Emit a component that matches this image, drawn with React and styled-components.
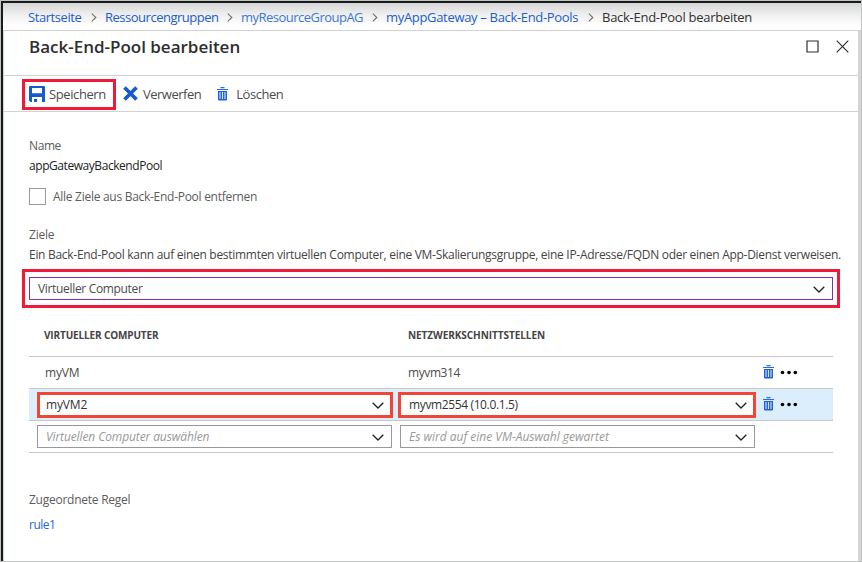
import React from "react";
import styled, { createGlobalStyle } from "styled-components";

const GlobalStyle = createGlobalStyle`
  *, *::before, *::after { box-sizing: border-box; }
  body {
    margin: 0;
    overflow: hidden;
    background: #fff;
    font-family: "Open Sans", "Noto Sans", sans-serif;
    font-size: 12px;
    line-height: 20px;
  }
  svg { display: block; flex: none; }
`;

const Frame = styled.div`
  height: 562px;
  border: 1px solid #c0c3c1;
`;

const Shell = styled.div`
  height: 560px;
  display: flex;
  flex-direction: column;
  border-top: 2px solid #161a19;
  border-left: 2px solid #161a19;
`;

const Breadcrumb = styled.nav`
  flex: none;
  height: 28px;
  padding: 1px 0 0 25px;
  display: flex;
  align-items: center;
  border-bottom: 1px solid #d2d2d2;
  background: linear-gradient(#d6d6d6, #f0f0f0 45%, #ffffff 85%);
`;

const Label = styled.span`
  white-space: nowrap;
  font-size: ${(p) => p.$size || 12}px;
  letter-spacing: ${(p) => p.$track || 0}px;
  color: ${(p) => p.$color || "#4c4c4c"};
`;

const Crumb = styled(Label)`
  width: ${(p) => p.$width}px;
  font-size: 13px;
`;

const Panel = styled.main`
  flex: 1;
  min-height: 0;
  border-left: 1px solid #d2d2d2;
  border-right: 3px solid #d5d5d5;
`;

const Header = styled.header`
  height: 45px;
  padding: 0 9px 13px 25px;
  display: flex;
  align-items: center;
  justify-content: space-between;
  border-bottom: 1px solid #d2d2d2;
`;

const Title = styled.h1`
  margin: 0;
  font-size: 17px;
  font-weight: 600;
  line-height: 24px;
  letter-spacing: -0.01px;
  color: #2e2e2e;
`;

const WindowButtons = styled.div`
  display: flex;
  gap: 17px;
`;

const Toolbar = styled.div`
  height: 36px;
  padding-left: 18px;
  display: flex;
  align-items: center;
  border-bottom: 1px solid #d2d2d2;
`;

const Command = styled.div`
  height: 31px;
  display: flex;
  align-items: center;
  gap: ${(p) => p.$gap}px;
  margin-left: ${(p) => p.$offset || 0}px;
`;

const MarkedCommand = styled(Command)`
  width: 94px;
  padding: 0 0 1px 4px;
  margin-top: 1px;
  border: 3px solid #f01a38;
`;

const Body = styled.section`
  padding: 24px 0 0 18px;
`;

const Field = styled.div`
  height: 20px;
  padding-left: 7px;
  display: flex;
  align-items: center;
  gap: 7px;
  margin-bottom: ${(p) => p.$after || 0}px;
`;

const Checkbox = styled.span`
  width: 17px;
  height: 17px;
  margin-bottom: 1px;
  border: 1px solid #999;
`;

const Highlight = styled.div`
  width: 818px;
  height: 39px;
  padding: 5px 4px;
  border: 3px solid #f01a38;
`;

const Select = styled.div`
  width: ${(p) => p.$width}px;
  height: ${(p) => (p.$marked ? 26 : 23)}px;
  margin-left: ${(p) => p.$offset || 0}px;
  padding: 1px ${(p) => (p.$marked ? 6 : 7)}px 0 ${(p) => p.$pad || 8}px;
  display: flex;
  align-items: center;
  justify-content: space-between;
  background: #fff;
  border: ${(p) => (p.$marked ? 3 : 1)}px solid ${(p) => p.$border};
`;

const Placeholder = styled(Label)`
  font-style: italic;
  color: #999;
`;

const Table = styled.div`
  width: 804px;
  margin: 8px 0 37px 7px;
`;

const TableHead = styled.div`
  height: 41px;
  display: grid;
  grid-template-columns: 364px 1fr;
  padding: 0 0 3px 15px;
  align-items: center;
  font-weight: 700;
  border-bottom: 1px solid #c8c8c8;
`;

const Row = styled.div`
  height: 32px;
  display: grid;
  grid-template-columns: 371px 363px 70px;
  align-items: center;
  background: ${(p) => (p.$active ? "#dceefc" : "transparent")};
  border-bottom: 1px solid #c8c8c8;
`;

const Cell = styled.div`
  display: flex;
  padding: 1px 0 0 ${(p) => p.$pad}px;
`;

const Actions = styled.div`
  display: flex;
  align-items: center;
  gap: 6px;
  padding-bottom: 1px;
`;

const Trash = () => (
  <svg width="11" height="14" viewBox="0 0 11 14">
    <path d="M3.500.6h4M0 2.500h11" stroke="#2a6ae0" strokeWidth="1.200" fill="none" />
    <path d="M1 4h9v8.500q0 1-1 1H2q-1 0-1-1z" fill="#1e60dc" />
    <path d="M3 5v7M5.500 5v7M8 5v7" stroke="#d4e3fb" strokeWidth="1.100" />
  </svg>
);

const Dots = () => (
  <svg width="18" height="5" viewBox="0 0 18 5">
    <g fill="#000">
      <circle cx="2.500" cy="2.500" r="1.800" />
      <circle cx="9" cy="2.500" r="1.800" />
      <circle cx="15.300" cy="2.500" r="1.800" />
    </g>
  </svg>
);

const Chevron = () => (
  <svg width="12" height="7" viewBox="0 0 12 7">
    <path d="M.7.7 6 6 11.300.7" fill="none" stroke="#222" strokeWidth="1.300" />
  </svg>
);

const Save = () => (
  <svg width="16" height="16" viewBox="0 0 16 16">
    <path
      fillRule="evenodd"
      fill="#1559d3"
      d="M1 0h14q1 0 1 1v15h-3v-5H3v5H1.500L0 14.500V1q0-1 1-1zM3 2v5.200h10V2zM5 13h3v3H5z"
    />
  </svg>
);

const Discard = () => (
  <svg width="15" height="15" viewBox="0 0 15 15">
    <path d="M1.500 1.500l12 12M13.500 1.500l-12 12" stroke="#1559d3" strokeWidth="3.700" />
  </svg>
);

const Separator = styled.svg.attrs({ width: 6, height: 9, viewBox: "0 0 6 9" })`
  margin-right: ${(p) => p.$after}px;
`;

const Arrow = ({ after }) => (
  <Separator $after={after}>
    <path d="M.8.7 4.800 4.500.8 8.300" fill="none" stroke="#707070" strokeWidth="1.100" />
  </Separator>
);

const LINK = "#1a5dcc";

export default function App() {
  return (
    <>
      <GlobalStyle />
      <Frame>
        <Shell>
          <Breadcrumb>
            <Crumb $width={63} $track={-0.43} $color={LINK}>Startseite</Crumb>
            <Arrow after={8} />
            <Crumb $width={122} $track={-0.49} $color={LINK}>Ressourcengruppen</Crumb>
            <Arrow after={8} />
            <Crumb $width={131} $track={-0.52} $color="#3a78d8">myResourceGroupAG</Crumb>
            <Arrow after={8} />
            <Crumb $width={202} $track={-0.32} $color={LINK}>myAppGateway – Back-End-Pools</Crumb>
            <Arrow after={8} />
            <Crumb $width={160} $track={-0.27} $color="#303030">Back-End-Pool bearbeiten</Crumb>
          </Breadcrumb>
          <Panel>
            <Header>
              <Title>Back-End-Pool bearbeiten</Title>
              <WindowButtons>
                <svg width="13" height="13" viewBox="0 0 13 13">
                  <path d="M1 1h11v11H1z" fill="none" stroke="#303030" strokeWidth="1.200" />
                </svg>
                <svg width="13" height="13" viewBox="0 0 13 13">
                  <path d="M.7.7l11.600 11.600M12.300.7.7 12.300" stroke="#303030" strokeWidth="1.200" />
                </svg>
              </WindowButtons>
            </Header>
            <Toolbar>
              <MarkedCommand $gap={4}>
                <Save />
                <Label $size={13} $track={-0.4}>Speichern</Label>
              </MarkedCommand>
              <Command $gap={5} $offset={7}>
                <Discard />
                <Label $size={13} $track={-0.5}>Verwerfen</Label>
              </Command>
              <Command $gap={8} $offset={16}>
                <Trash />
                <Label $size={13} $track={-0.45}>Löschen</Label>
              </Command>
            </Toolbar>
            <Body>
              <Field><Label $track={-0.4} $color="#5c5c5c">Name</Label></Field>
              <Field $after={11}><Label $track={-0.44} $color="#222">appGatewayBackendPool</Label></Field>
              <Field $after={18}>
                <Checkbox />
                <Label $track={-0.28} $color="#5c5c5c">Alle Ziele aus Back-End-Pool entfernen</Label>
              </Field>
              <Field><Label $track={-0.2} $color="#5c5c5c">Ziele</Label></Field>
              <Field $after={4}>
                <Label $track={-0.289} $color="#444">
                  Ein Back-End-Pool kann auf einen bestimmten virtuellen Computer, eine VM-Skalierungsgruppe, eine IP-Adresse/FQDN oder einen App-Dienst verweisen.
                </Label>
              </Field>
              <Highlight>
                <Select $width={804} $border="#8a2da5">
                  <Label $track={-0.33}>Virtueller Computer</Label>
                  <Chevron />
                </Select>
              </Highlight>
              <Table>
                <TableHead>
                  <Label $size={10} $track={-0.14} $color="#444">VIRTUELLER COMPUTER</Label>
                  <Label $size={10} $track={-0.06} $color="#444">NETZWERKSCHNITTSTELLEN</Label>
                </TableHead>
                <Row>
                  <Cell $pad={16}><Label $track={-0.2}>myVM</Label></Cell>
                  <Cell $pad={8}><Label $track={-0.4}>myvm314</Label></Cell>
                  <Actions><Trash /><Dots /></Actions>
                </Row>
                <Row $active>
                  <Select $marked $width={356} $offset={8} $pad={6} $border="#f24634">
                    <Label $track={-0.15} $color="#333">myVM2</Label>
                    <Chevron />
                  </Select>
                  <Select $marked $width={358} $offset={-2} $pad={8} $border="#f24634">
                    <Label $track={-0.37} $color="#333">myvm2554 (10.0.1.5)</Label>
                    <Chevron />
                  </Select>
                  <Actions><Trash /><Dots /></Actions>
                </Row>
                <Row>
                  <Select $width={355} $offset={8} $border="#999">
                    <Placeholder $track={-0.1} $color="#999">Virtuellen Computer auswählen</Placeholder>
                    <Chevron />
                  </Select>
                  <Select $width={355} $border="#999">
                    <Placeholder $track={-0.01} $color="#999">Es wird auf eine VM-Auswahl gewartet</Placeholder>
                    <Chevron />
                  </Select>
                </Row>
              </Table>
              <Field $after={5}><Label $track={-0.25} $color="#5c5c5c">Zugeordnete Regel</Label></Field>
              <Field><Label $track={-0.5} $color="#2468d8">rule1</Label></Field>
            </Body>
          </Panel>
        </Shell>
      </Frame>
    </>
  );
}
